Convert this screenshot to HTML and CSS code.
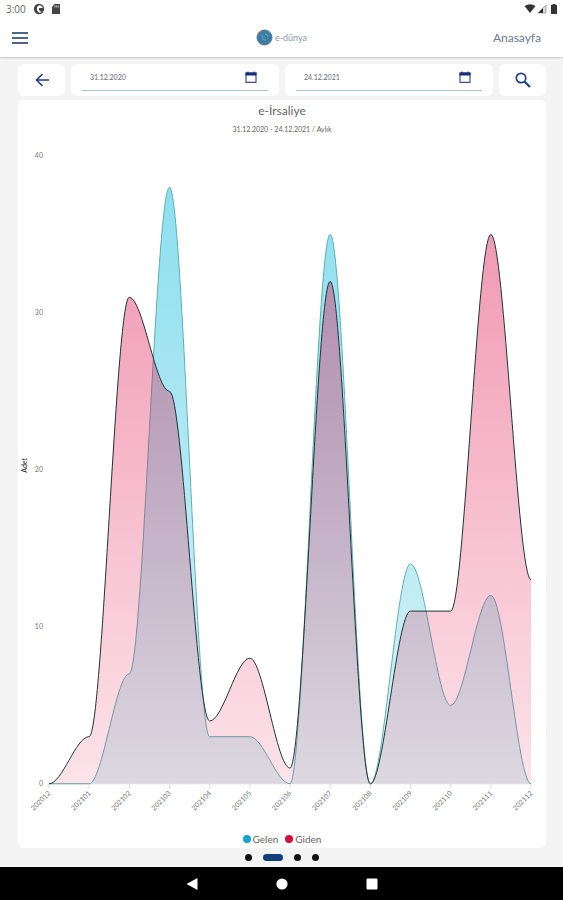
FILE: index.html
```html
<!DOCTYPE html>
<html lang="tr">
<head>
    <meta charset="UTF-8">
    <meta name="viewport" content="width=device-width, initial-scale=1.0">
    <title>e-İrsaliye</title>
    <link rel="stylesheet" href="styles.css">
</head>
<body>
    <div class="status-bar">
        <span class="clock">3:00</span>
        <svg class="status-icon" viewBox="0 0 12 12"><circle cx="6" cy="6" r="4.500" fill="#fff" stroke="#444" stroke-width="1.300"/><path d="M2 3l3-2 1 1-2 2 0 3 2 3-2 0-2-2zM6 5h5l-1 3-2 1-2-2z" fill="#444"/></svg>
        <svg class="status-icon" viewBox="0 0 12 12"><path d="M4.500 1H10v10H2V4z" fill="#444"/><path d="M5 2.500v2M6.700 2.500v2M8.400 2.500v2" stroke="#ccc"/></svg>
        <div class="status-right">
            <svg class="status-icon" viewBox="0 0 12 12"><path d="M0.500 3Q6-0.500 11.500 3L6 10z" fill="#333"/></svg>
            <svg class="status-icon" viewBox="0 0 12 12"><path d="M10 2v8H2z" fill="#ddd"/><path d="M7 5v5H2z" fill="#222"/><path d="M10 2v8H2z" fill="none" stroke="#777" stroke-width="0.600"/></svg>
            <svg class="status-icon" viewBox="0 0 12 12"><path d="M4.500 1h3v1H9v9H3V2h1.500z" fill="#333"/></svg>
        </div>
    </div>

    <header class="app-bar">
        <button type="button" class="icon-button" aria-label="Menü">
            <svg width="16" height="12" viewBox="0 0 16 12"><path d="M0 1h16M0 6h16M0 11h16" stroke="#4c6494" stroke-width="2"/></svg>
        </button>
        <div class="logo">
            <svg width="17" height="17" viewBox="0 0 17 17">
                <circle cx="8.500" cy="8.500" r="7.500" fill="#3a7ca5" stroke="#4b7890"/>
                <path d="M1.500 6A7.500 7.500 0 0 1 6 1.500M13 14.500a7.500 7.500 0 0 1-3 1.300" fill="none" stroke="#d9705f"/>
                <path d="M10 1.200a7.500 7.500 0 0 1 4 2.300" fill="none" stroke="#59a88c"/>
                <path d="M5 5.500l3 3M6 8q1 4 4 3M9 5q3 0 3 3" fill="none" stroke="#6aa3c2"/>
            </svg>
            <span>e-dünya</span>
        </div>
        <a class="page-link" href="#">Anasayfa</a>
    </header>

    <main class="content">
        <form class="filters">
            <button type="button" class="box box-button" aria-label="Geri">
                <svg width="14" height="14" viewBox="0 0 14 14"><path d="M7.500 1L1.500 7l6 6M1.500 7H14" fill="none" stroke="#1d3a7c" stroke-width="1.600"/></svg>
            </button>
            <div class="box date-box">
                <div class="date-line">
                    <input type="text" aria-label="Başlangıç tarihi" value="31.12.2020">
                    <svg width="12" height="12" viewBox="0 0 12 12"><path d="M1 2h10v9.300H1z" fill="none" stroke="#3c4f93" stroke-width="1.200"/><path d="M0.500 1.500h11v3h-11zM2.500 0.500h1v1h-1zM8.500 0.500h1v1h-1z" fill="#162c78"/></svg>
                </div>
            </div>
            <div class="box date-box">
                <div class="date-line">
                    <input type="text" aria-label="Bitiş tarihi" value="24.12.2021">
                    <svg width="12" height="12" viewBox="0 0 12 12"><path d="M1 2h10v9.300H1z" fill="none" stroke="#3c4f93" stroke-width="1.200"/><path d="M0.500 1.500h11v3h-11zM2.500 0.500h1v1h-1zM8.500 0.500h1v1h-1z" fill="#162c78"/></svg>
                </div>
            </div>
            <button type="button" class="box box-button" aria-label="Ara">
                <svg width="16" height="16" viewBox="0 0 16 16"><circle cx="6" cy="6" r="4.700" fill="none" stroke="#1d4080" stroke-width="1.700"/><path d="M9.500 9.500l5.500 5.500" stroke="#1d4080" stroke-width="2.200"/></svg>
            </button>
        </form>

        <section class="chart-card">
            <h1>e-İrsaliye</h1>
            <p class="period">31.12.2020 - 24.12.2021 / Aylık</p>
            <svg class="chart" id="chart" viewBox="0 0 529 695">
                <defs>
                    <linearGradient id="gelenFill" x1="0" y1="0" x2="0" y2="1">
                        <stop offset="0" stop-color="#8cdff0"/>
                        <stop offset="1" stop-color="#dcf3f5"/>
                    </linearGradient>
                    <linearGradient id="gidenFill" x1="0" y1="0" x2="0" y2="1">
                        <stop offset="0" stop-color="#dc1450" stop-opacity="0.43"/>
                        <stop offset="1" stop-color="#e6144b" stop-opacity="0.12"/>
                    </linearGradient>
                </defs>
                <text class="axis-title" transform="translate(9 330) rotate(-90)">Adet</text>
            </svg>
            <div class="legend">
                <span class="legend-item"><i class="marker gelen"></i>Gelen</span>
                <span class="legend-item"><i class="marker giden"></i>Giden</span>
            </div>
        </section>

        <div class="pager">
            <button type="button" aria-label="Sayfa 1"></button>
            <button type="button" class="active" aria-label="Sayfa 2"></button>
            <button type="button" aria-label="Sayfa 3"></button>
            <button type="button" aria-label="Sayfa 4"></button>
        </div>
    </main>

    <nav class="system-nav">
        <button type="button" aria-label="Geri dön"><svg width="12" height="12" viewBox="0 0 12 12"><path d="M11.500 0v12L0.500 6z" fill="#fff"/></svg></button>
        <button type="button" aria-label="Ana ekran"><svg width="12" height="12" viewBox="0 0 12 12"><circle cx="6" cy="6" r="5.600" fill="#fff"/></svg></button>
        <button type="button" aria-label="Son uygulamalar"><svg width="12" height="12" viewBox="0 0 12 12"><rect x="0.500" y="0.500" width="11" height="11" rx="1" fill="#fff"/></svg></button>
    </nav>
    <script src="chart.js"></script>
</body>
</html>
```

FILE: styles.css
```css
* {
    box-sizing: border-box;
}

body {
    font-family: Lato, "Open Sans", sans-serif;
    margin: 0;
    min-height: 100vh;
    display: flex;
    flex-direction: column;
    background-color: #f4f4f4;
    color: #666;
}

button {
    padding: 0;
    border: none;
    background: none;
    cursor: pointer;
}

svg {
    display: block;
}

.status-bar {
    display: flex;
    align-items: center;
    height: 18px;
    padding: 0 3px 0 6px;
    background-color: #fff;
}

.clock {
    font-family: "Open Sans", sans-serif;
    font-size: 10px;
    color: #666;
    margin-right: 7px;
}

.status-icon {
    width: 12px;
    height: 12px;
    margin-right: 5px;
}

.status-right {
    display: flex;
    margin-left: auto;
}

.status-right .status-icon {
    margin-right: 0;
}

.app-bar {
    display: grid;
    grid-template-columns: 1fr auto 1fr;
    align-items: center;
    height: 39px;
    padding: 0 22px 0 12px;
    background-color: #fff;
    box-shadow: 0 1px 2px rgba(0, 0, 0, 0.2);
}

.icon-button {
    justify-self: start;
}

.logo {
    display: flex;
    align-items: center;
    gap: 2px;
    margin-left: 10px;
    font-size: 9px;
    color: #8c98a8;
}

.page-link {
    justify-self: end;
    font-size: 12px;
    line-height: 14px;
    color: #6c7a94;
    text-decoration: none;
}

.content {
    flex: 1;
    padding: 7px 17px 0 18px;
}

.filters {
    display: flex;
    gap: 6px;
    margin-bottom: 4px;
}

.box {
    height: 32px;
    background-color: #fff;
    border-radius: 6px;
}

.box-button {
    display: flex;
    flex: 0 0 47px;
    align-items: center;
    justify-content: center;
}

.date-box {
    flex: 1;
    min-width: 0;
    padding: 0 11px;
}

.date-line {
    display: flex;
    align-items: center;
    height: 27px;
    padding: 0 11px 0 8px;
    border-bottom: 1px solid #a9c2cf;
}

.date-line input {
    flex: 1;
    min-width: 0;
    padding: 0;
    border: none;
    outline: none;
    background: none;
    font-family: inherit;
    font-size: 7px;
    color: #667;
}

.chart-card {
    padding-top: 4px;
    background-color: #fff;
    border-radius: 6px;
    text-align: center;
}

.chart-card h1 {
    margin: 0;
    font-size: 12px;
    line-height: 14px;
    font-weight: normal;
}

.period {
    margin: 4px 0 0;
    font-size: 7px;
    line-height: 14px;
}

.chart {
    width: 100%;
    overflow: visible;
}

.chart text {
    font-size: 7px;
    fill: #777;
    text-anchor: end;
}

.chart .axis-title {
    fill: #222;
    text-anchor: middle;
}

.axis {
    stroke: #ddd;
    fill: none;
}

.line-gelen {
    fill: none;
    stroke: #5cb0ae;
}

.line-giden {
    fill: none;
    stroke: #1c3438;
}

.legend {
    display: flex;
    justify-content: center;
    gap: 7px;
    font-size: 10px;
    line-height: 18px;
}

.legend-item {
    display: flex;
    align-items: center;
    gap: 2px;
}

.marker {
    width: 8px;
    height: 8px;
    border-radius: 50%;
}

.marker.gelen {
    background-color: #0fa5cf;
}

.marker.giden {
    background-color: #d9083a;
}

.pager {
    display: flex;
    align-items: center;
    justify-content: center;
    gap: 11px;
    height: 19px;
}

.pager button {
    width: 7px;
    height: 7px;
    border-radius: 4px;
    background-color: #111;
}

.pager .active {
    width: 20px;
    background-color: #123f7c;
}

.system-nav {
    display: flex;
    align-items: center;
    justify-content: center;
    gap: 78px;
    height: 33px;
    background-color: #000;
}
```

FILE: chart.js
```js
const months = ['202012', '202101', '202102', '202103', '202104', '202105', '202106',
    '202107', '202108', '202109', '202110', '202111', '202112'];
const gelen = [0, 0, 7, 38, 3, 3, 0, 35, 0, 14, 5, 12, 0];
const giden = [0, 3, 31, 25, 4, 8, 1, 32, 0, 11, 11, 35, 13];

const left = 31;
const right = 514;
const top40 = 20;
const bottom = 649;
const step = (right - left) / (months.length - 1);
const chart = document.getElementById('chart');

function px(i) {
    return left + i * step;
}

function py(value) {
    return bottom - value * (bottom - top40) / 40;
}

function add(name, attrs, text) {
    const el = document.createElementNS('http://www.w3.org/2000/svg', name);
    Object.keys(attrs).forEach(key => el.setAttribute(key, attrs[key]));
    if (text !== undefined) {
        el.textContent = text;
    }
    chart.appendChild(el);
}

// Smooth line that is level at every point
function linePath(values) {
    let d = `M${px(0)} ${py(values[0])}`;
    for (let i = 1; i < values.length; i++) {
        d += ` C${px(i - 1) + step / 3} ${py(values[i - 1])} ${px(i) - step / 3} ${py(values[i])} ${px(i)} ${py(values[i])}`;
    }
    return d;
}

function drawSeries(name, values) {
    const line = linePath(values);
    add('path', { d: `${line} V${bottom} H${left} Z`, fill: `url(#${name}Fill)` });
    add('path', { d: line, class: `line-${name}` });
}

[0, 10, 20, 30, 40].forEach(value => {
    add('text', { x: 25, y: py(value) + 2 }, value);
});

months.forEach((month, i) => {
    add('path', { d: `M${px(i)} ${bottom}v5`, class: 'axis' });
    add('text', { transform: `translate(${px(i) + 2} ${bottom + 10}) rotate(-45)` }, month);
});

add('path', { d: `M${left} ${bottom}H${right}`, class: 'axis' });
drawSeries('gelen', gelen);
drawSeries('giden', giden);
```
